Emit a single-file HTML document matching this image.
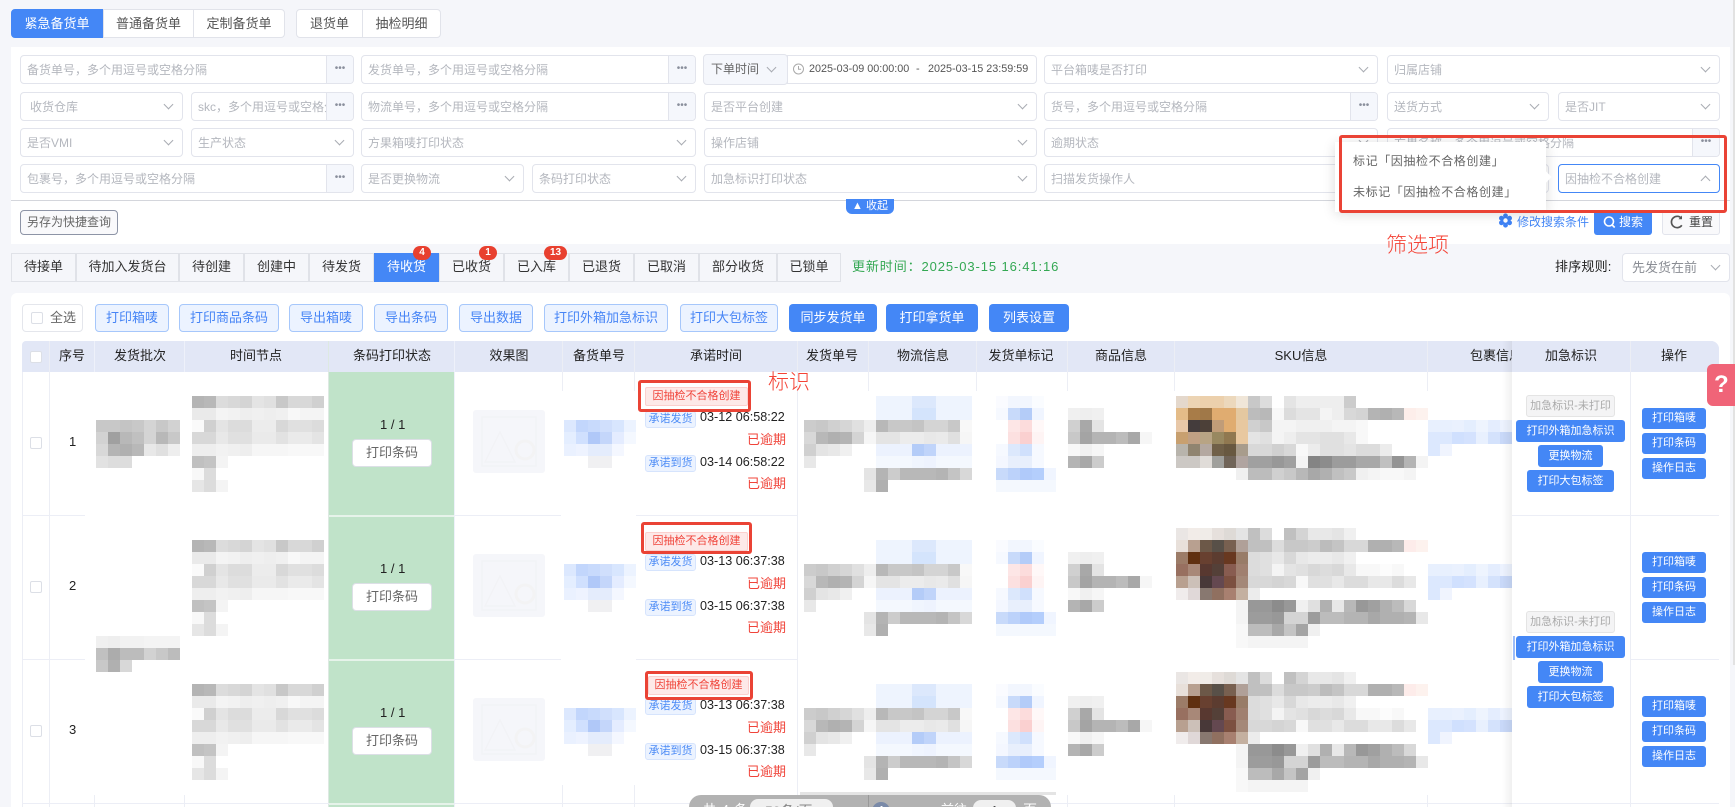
<!DOCTYPE html>
<html lang="zh"><head><meta charset="utf-8"><title>备货单</title>
<style>
*{box-sizing:border-box}
html,body{margin:0;padding:0;width:1735px;height:807px;overflow:hidden}
body{background:#f5f6fa;font-family:"Liberation Sans","Noto Sans CJK SC",sans-serif;font-size:13px;color:#222}
#w{position:relative;width:1735px;height:807px;overflow:hidden;background:#f5f6fa}
.a{position:absolute}
.x{position:absolute;white-space:nowrap;line-height:20px}
.g{position:absolute;top:9px;height:29px;background:#fff;border:1px solid #e1e3ea;text-align:center;line-height:27px;color:#555}
.f{position:absolute;height:29px;background:#fff;border:1.5px solid #e2e4ec;border-radius:4px;padding-left:6px;line-height:28px;font-size:12px;color:#b4b7be;white-space:nowrap;overflow:hidden}
.f u{position:absolute;right:0;top:0;bottom:0;width:27px;background:#f5f7fc;border-left:1px solid #e2e4ec;text-decoration:none;text-align:center;color:#8a8f9c;font-size:10px;line-height:26px}
.f i{position:absolute;right:10px;top:8px;width:7px;height:7px;border-right:1px solid #a8abb2;border-bottom:1px solid #a8abb2;transform:rotate(45deg)}
.t{position:absolute;top:253px;height:29px;border:1.5px solid #e0e2e8;border-left-width:.75px;border-right-width:.75px;background:#f5f6fa;text-align:center;line-height:26px;color:#333}
.bd{position:absolute;top:246px;height:14px;background:#e8402f;color:#fff;border-radius:7px;font-size:10px;font-weight:bold;text-align:center;line-height:14px;z-index:5}
.l{position:absolute;top:304px;height:28px;background:#ecf3ff;border:1px solid #a6c7fb;border-radius:4px;text-align:center;line-height:26px;color:#4785f6;white-space:nowrap}
.p{position:absolute;top:304px;height:28px;background:#4487f6;border-radius:4px;text-align:center;line-height:28px;color:#fff}
.h{position:absolute;top:346px;width:100px;text-align:center;line-height:20px;color:#222;white-space:nowrap}
.v{position:absolute;width:1px;background:#eceef5}
.r{position:absolute;height:1px;background:#eceef6}
.cb{position:absolute;width:12px;height:12px;background:#fff;border:1px solid #dcdfe6;border-radius:2px}
.pb{position:absolute;width:80px;height:28px;left:352px;background:#fff;border:1px solid #dcdfe6;border-radius:4px;text-align:center;line-height:26px;color:#666}
.ph{position:absolute;left:473px;width:72px;height:63px;background:#f5f6fa;border-radius:3px}
.pk{position:absolute;height:19px;background:#fde9e8;border:1px solid #fbd0ce;border-radius:2px;color:#f0443a;font-size:11px;text-align:center;line-height:17px;white-space:nowrap}
.bl{position:absolute;left:645px;width:51px;height:17px;background:#ecf3ff;border:1px solid #d6e4fd;border-radius:3px;color:#4d8cf6;font-size:11px;text-align:center;line-height:15px;white-space:nowrap}
.dt{position:absolute;left:700px;font-size:12.6px;line-height:20px;color:#222;white-space:nowrap}
.od{position:absolute;left:747px;line-height:20px;color:#f0443a;white-space:nowrap}
.rd{position:absolute;border:3px solid #ea4335;border-radius:3px;z-index:6}
.an{position:absolute;color:#f44336;font-size:21px;line-height:24px;font-weight:300;white-space:nowrap;z-index:6}
.s{position:absolute;height:22px;background:#4487f6;border-radius:3px;color:#fff;font-size:11px;line-height:22px;text-align:center;white-space:nowrap;z-index:3}
svg .mm rect{width:12px;height:12px}
</style></head><body><div id="w">

<!-- top tabs -->
<div class="g" style="left:11px;width:92px;background:#4487f6;border-color:#4487f6;color:#fff;border-radius:4px 0 0 4px">紧急备货单</div>
<div class="g" style="left:103px;width:91px">普通备货单</div>
<div class="g" style="left:193px;width:92px;border-radius:0 4px 4px 0">定制备货单</div>
<div class="g" style="left:296px;width:67px;border-radius:4px 0 0 4px">退货单</div>
<div class="g" style="left:362px;width:79px;border-radius:0 4px 4px 0">抽检明细</div>

<!-- filter panel -->
<div class="a" style="left:11px;top:47px;width:1719px;height:197px;background:#fff"></div>

<div class="f" style="left:20px;top:55px;width:334px">备货单号，多个用逗号或空格分隔<u>•••</u></div>
<div class="f" style="left:361px;top:55px;width:335px">发货单号，多个用逗号或空格分隔<u>•••</u></div>
<div class="f" style="left:703px;top:54px;width:85px;height:31px;background:#f5f7fc;color:#666;padding-left:7px;line-height:28px">下单时间<i style="top:9px;right:12px"></i></div>
<div class="f" style="left:787px;top:55px;width:250px;border-radius:0 4px 4px 0"></div>
<svg class="a" style="left:792px;top:62px" width="13" height="14" viewBox="0 0 13 14"><circle cx="6.5" cy="7" r="5" fill="none" stroke="#aaa"/><path d="M6.5 4v3.2h2.6" fill="none" stroke="#aaa"/></svg>
<div class="x" style="left:809px;top:59px;font-size:10.8px;color:#555">2025-03-09 00:00:00</div>
<div class="x" style="left:916px;top:59px;font-size:11px;color:#555">-</div>
<div class="x" style="left:928px;top:59px;font-size:10.8px;color:#555">2025-03-15 23:59:59</div>
<div class="f" style="left:1044px;top:55px;width:334px">平台箱唛是否打印<i></i></div>
<div class="f" style="left:1387px;top:55px;width:333px">归属店铺<i></i></div>

<div class="f" style="left:20px;top:92px;width:163px;padding-left:9px">收货仓库<i></i></div>
<div class="f" style="left:191px;top:92px;width:163px"><span style="display:block;width:129px;overflow:hidden">skc，多个用逗号或空格分隔</span><u>•••</u></div>
<div class="f" style="left:361px;top:92px;width:335px">物流单号，多个用逗号或空格分隔<u>•••</u></div>
<div class="f" style="left:704px;top:92px;width:333px">是否平台创建<i></i></div>
<div class="f" style="left:1044px;top:92px;width:334px">货号，多个用逗号或空格分隔<u>•••</u></div>
<div class="f" style="left:1387px;top:92px;width:162px">送货方式<i></i></div>
<div class="f" style="left:1558px;top:92px;width:162px">是否JIT<i></i></div>

<div class="f" style="left:20px;top:128px;width:163px">是否VMI<i></i></div>
<div class="f" style="left:191px;top:128px;width:163px">生产状态<i></i></div>
<div class="f" style="left:361px;top:128px;width:335px">方果箱唛打印状态<i></i></div>
<div class="f" style="left:704px;top:128px;width:333px">操作店铺<i></i></div>
<div class="f" style="left:1044px;top:128px;width:334px">逾期状态<i></i></div>
<div class="f" style="left:1387px;top:128px;width:333px">方果名称，多个用逗号或空格分隔<u>•••</u></div>

<div class="f" style="left:20px;top:164px;width:334px">包裹号，多个用逗号或空格分隔<u>•••</u></div>
<div class="f" style="left:361px;top:164px;width:163px">是否更换物流<i></i></div>
<div class="f" style="left:532px;top:164px;width:164px">条码打印状态<i></i></div>
<div class="f" style="left:704px;top:164px;width:333px">加急标识打印状态<i></i></div>
<div class="f" style="left:1044px;top:164px;width:334px">扫描发货操作人<i></i></div>
<div class="f" style="left:1387px;top:164px;width:162px">是否<i></i></div>
<div class="f" style="left:1558px;top:164px;width:162px;border:1px solid #4487f6">因抽检不合格创建<i style="top:12px;transform:rotate(225deg)"></i></div>

<div class="a" style="left:11px;top:200px;width:1719px;height:1px;background:#d4d6dc"></div>
<div class="a" style="left:846px;top:199px;width:48px;height:15px;background:#4487f6;border-radius:0 0 6px 6px;color:#fff;font-size:11px;line-height:15px;text-align:center;white-space:nowrap">▲ 收起</div>

<div class="a" style="left:20px;top:210px;width:98px;height:25px;background:#f9f9fb;border:1px solid #8d94a6;border-radius:4px;font-size:12px;text-align:center;line-height:23px;color:#666">另存为快捷查询</div>

<svg class="a" style="left:1498px;top:213px" width="15" height="15" viewBox="0 0 15 15"><g fill="#3f83f5"><circle cx="7.500" cy="2.800" r="2.400"/><circle cx="7.500" cy="12.200" r="2.400"/><circle cx="3.400" cy="5.200" r="2.400"/><circle cx="11.600" cy="5.200" r="2.400"/><circle cx="3.400" cy="9.800" r="2.400"/><circle cx="11.600" cy="9.800" r="2.400"/><circle cx="7.500" cy="7.500" r="4"/></g><circle cx="7.500" cy="7.500" r="2.200" fill="#fff"/></svg>
<div class="x" style="left:1517px;top:212px;font-size:12px;color:#4487f6">修改搜索条件</div>
<div class="a" style="left:1594px;top:210px;width:58px;height:25px;background:#4487f6;border-radius:3px;color:#fff;font-size:12px;line-height:25px;padding-left:25px">搜索</div>
<svg class="a" style="left:1602px;top:215px" width="15" height="15" viewBox="0 0 15 15"><circle cx="7" cy="6.500" r="4.500" fill="none" stroke="#fff" stroke-width="1.600"/><path d="M10.200 10l2.500 2.500" stroke="#fff" stroke-width="1.600"/></svg>
<div class="a" style="left:1662px;top:210px;width:58px;height:25px;background:#f9f9fb;border:1px solid #e2e4ec;border-radius:3px;color:#444;font-size:12px;line-height:23px;padding-left:26px">重置</div>
<svg class="a" style="left:1669px;top:214px" width="16" height="16" viewBox="0 0 16 16"><path d="M12.500 4.300A5.700 5.700 0 1 0 12.800 11.300" fill="none" stroke="#555" stroke-width="1.700"/><path d="M13 1.500v3.800H9.500z" fill="#555"/></svg>

<!-- popover -->
<div class="a" style="left:1335px;top:142px;width:211px;height:70px;background:#fff;box-shadow:0 2px 12px rgba(0,0,0,.14);z-index:4"></div>
<div class="a" style="left:1542px;top:173px;width:8px;height:8px;background:#fff;transform:rotate(45deg);z-index:4"></div>
<div class="x" style="left:1353px;top:151px;font-size:12px;color:#666;z-index:5;letter-spacing:.6px">标记「因抽检不合格创建」</div>
<div class="x" style="left:1353px;top:182px;font-size:12px;color:#666;z-index:5;letter-spacing:.6px">未标记「因抽检不合格创建」</div>
<div class="rd" style="left:1339px;top:135px;width:388px;height:78px"></div>
<div class="an" style="left:1386px;top:234px">筛选项</div>

<!-- status tabs -->
<div class="t" style="left:11px;width:65px">待接单</div>
<div class="t" style="left:76px;width:103px">待加入发货台</div>
<div class="t" style="left:179px;width:65px">待创建</div>
<div class="t" style="left:244px;width:65px">创建中</div>
<div class="t" style="left:309px;width:65px">待发货</div>
<div class="t" style="left:374px;width:65px;background:#4487f6;border-color:#4487f6;color:#fff">待收货</div>
<div class="t" style="left:439px;width:65px">已收货</div>
<div class="t" style="left:504px;width:65px">已入库</div>
<div class="t" style="left:569px;width:65px">已退货</div>
<div class="t" style="left:634px;width:65px">已取消</div>
<div class="t" style="left:699px;width:78px">部分收货</div>
<div class="t" style="left:777px;width:64px">已锁单</div>
<div class="bd" style="left:413px;width:18px">4</div>
<div class="bd" style="left:479px;width:18px">1</div>
<div class="bd" style="left:544px;width:23px">13</div>
<div class="x" style="left:852px;top:257px;color:#34a853;letter-spacing:.9px">更新时间：2025-03-15 16:41:16</div>
<div class="x" style="left:1555px;top:257px;color:#222;letter-spacing:.2px">排序规则:</div>
<div class="f" style="left:1622px;top:253px;width:108px;height:29px;font-size:13px;color:#8a8d94;padding-left:9px">先发货在前<i></i></div>

<!-- table panel -->
<div class="a" style="left:11px;top:293px;width:1719px;height:514px;background:#fff;border-radius:6px 6px 0 0"></div>

<div class="a" style="left:22px;top:304px;width:61px;height:28px;border:1px solid #e4e6ec;border-radius:4px;background:#fff"></div>
<div class="cb" style="left:31px;top:312px"></div>
<div class="x" style="left:50px;top:308px;color:#666">全选</div>
<div class="l" style="left:95px;width:74px">打印箱唛</div>
<div class="l" style="left:179px;width:100px">打印商品条码</div>
<div class="l" style="left:289px;width:74px">导出箱唛</div>
<div class="l" style="left:374px;width:74px">导出条码</div>
<div class="l" style="left:459px;width:74px">导出数据</div>
<div class="l" style="left:544px;width:124px">打印外箱加急标识</div>
<div class="l" style="left:680px;width:98px">打印大包标签</div>
<div class="p" style="left:789px;width:88px">同步发货单</div>
<div class="p" style="left:886px;width:92px">打印拿货单</div>
<div class="p" style="left:989px;width:80px">列表设置</div>

<!-- table head -->
<div class="a" style="left:22px;top:341px;width:1697px;height:31px;background:#e2e7f6;border-radius:4px 8px 0 0"></div>
<div class="cb" style="left:30px;top:351px"></div>
<div class="h" style="left:22px;width:100px">序号</div>
<div class="h" style="left:90px">发货批次</div>
<div class="h" style="left:206px">时间节点</div>
<div class="h" style="left:342px">条码打印状态</div>
<div class="h" style="left:459px">效果图</div>
<div class="h" style="left:549px">备货单号</div>
<div class="h" style="left:666px">承诺时间</div>
<div class="h" style="left:782px">发货单号</div>
<div class="h" style="left:873px">物流信息</div>
<div class="h" style="left:971px">发货单标记</div>
<div class="h" style="left:1071px">商品信息</div>
<div class="h" style="left:1251px">SKU信息</div>
<div class="x" style="left:1470px;top:346px">包裹信息</div>

<!-- grid lines -->
<div class="v" style="left:22px;top:372px;height:435px"></div>
<div class="v" style="left:49px;top:341px;height:466px"></div>
<div class="v" style="left:94px;top:341px;height:31px;background:#eef1fa"></div>
<div class="v" style="left:184px;top:341px;height:31px;background:#eef1fa"></div>
<div class="v" style="left:328px;top:341px;height:466px;background:#dde9e2"></div>
<div class="v" style="left:454px;top:341px;height:466px;background:#eef1fa"></div>
<div class="v" style="left:562px;top:341px;height:50px"></div>
<div class="v" style="left:634px;top:341px;height:50px"></div>
<div class="v" style="left:797px;top:341px;height:466px"></div>
<div class="v" style="left:868px;top:341px;height:50px"></div>
<div class="v" style="left:976px;top:341px;height:50px"></div>
<div class="v" style="left:1067px;top:341px;height:50px"></div>
<div class="v" style="left:1174px;top:341px;height:50px"></div>
<div class="v" style="left:1427px;top:341px;height:50px"></div>
<div class="v" style="left:562px;top:785px;height:22px"></div>
<div class="v" style="left:634px;top:785px;height:22px"></div>
<div class="v" style="left:94px;top:795px;height:12px"></div>
<div class="v" style="left:184px;top:795px;height:12px"></div>
<div class="v" style="left:1067px;top:795px;height:12px"></div>
<div class="v" style="left:1174px;top:795px;height:12px"></div>
<div class="v" style="left:1427px;top:795px;height:12px"></div>
<div class="r" style="left:22px;top:515px;width:63px"></div>
<div class="r" style="left:22px;top:659px;width:63px"></div>
<div class="r" style="left:22px;top:803px;width:1697px"></div>
<div class="r" style="left:455px;top:515px;width:106px"></div>
<div class="r" style="left:455px;top:659px;width:106px"></div>
<div class="r" style="left:636px;top:515px;width:161px"></div>
<div class="r" style="left:636px;top:659px;width:161px"></div>

<!-- green barcode column -->
<div class="a" style="left:329px;top:372px;width:125px;height:435px;background:#c0e3c9"></div>
<div class="a" style="left:329px;top:515px;width:125px;height:1.500px;background:#e6f3ea"></div>
<div class="a" style="left:329px;top:659px;width:125px;height:1.500px;background:#e6f3ea"></div>
<div class="a" style="left:329px;top:803px;width:125px;height:1.500px;background:#e6f3ea"></div>

<!-- row contents -->
<div class="cb" style="left:30px;top:437px"></div><div class="x" style="left:69px;top:432px">1</div>
<div class="cb" style="left:30px;top:581px"></div><div class="x" style="left:69px;top:576px">2</div>
<div class="cb" style="left:30px;top:725px"></div><div class="x" style="left:69px;top:720px">3</div>

<div class="x" style="left:380px;top:415px">1 / 1</div><div class="pb" style="top:439px">打印条码</div>
<div class="x" style="left:380px;top:559px">1 / 1</div><div class="pb" style="top:583px">打印条码</div>
<div class="x" style="left:380px;top:703px">1 / 1</div><div class="pb" style="top:727px">打印条码</div>

<div class="ph" style="top:410px"><svg width="72" height="63" viewBox="0 0 72 63"><path d="M9 7h54v49H9zM12 52L27 22l15 30z" fill="none" stroke="#f2f3f6" stroke-width="1.500"/><circle cx="52" cy="40" r="9" fill="none" stroke="#f3f3f4" stroke-width="3"/></svg></div>
<div class="ph" style="top:554px"><svg width="72" height="63" viewBox="0 0 72 63"><path d="M9 7h54v49H9zM12 52L27 22l15 30z" fill="none" stroke="#f2f3f6" stroke-width="1.500"/><circle cx="52" cy="40" r="9" fill="none" stroke="#f3f3f4" stroke-width="3"/></svg></div>
<div class="ph" style="top:698px"><svg width="72" height="63" viewBox="0 0 72 63"><path d="M9 7h54v49H9zM12 52L27 22l15 30z" fill="none" stroke="#f2f3f6" stroke-width="1.500"/><circle cx="52" cy="40" r="9" fill="none" stroke="#f3f3f4" stroke-width="3"/></svg></div>

<!-- mosaic blocks -->
<svg class="a" style="left:0;top:0;z-index:1;pointer-events:none" width="1735" height="807" viewBox="0 0 1735 807">
<g class="mm">
<!-- batch 1 -->
<rect x="96" y="420" fill="#c8c8c8"/><rect x="108" y="420" fill="#c8c8c8"/><rect x="120" y="420" fill="#c4c4c4"/><rect x="132" y="420" fill="#c8c8c8"/><rect x="144" y="420" fill="#d4d4d4"/><rect x="156" y="420" fill="#c8c8c8"/><rect x="168" y="420" fill="#d2d2d2"/>
<rect x="96" y="432" fill="#d2d2d2"/><rect x="108" y="432" fill="#a0a0a0"/><rect x="120" y="432" fill="#b8b8b8"/><rect x="132" y="432" fill="#c0c0c0"/><rect x="144" y="432" fill="#d4d4d4"/><rect x="156" y="432" fill="#b8b8b8"/><rect x="168" y="432" fill="#c8c8c8"/>
<rect x="96" y="444" fill="#d8d8d8"/><rect x="108" y="444" fill="#b4b4b4"/><rect x="120" y="444" fill="#b0b0b0"/><rect x="132" y="444" fill="#b8b8b8"/><rect x="144" y="444" fill="#e8e8e8"/><rect x="156" y="444" fill="#e0e0e0"/><rect x="168" y="444" fill="#eeeeee"/>
<rect x="96" y="456" fill="#e2e2e2"/><rect x="108" y="456" fill="#dddddd"/><rect x="120" y="456" fill="#dddddd"/>
<!-- batch 2 -->
<rect x="96" y="636" fill="#f0f0f0"/><rect x="108" y="636" fill="#eeeeee"/><rect x="120" y="636" fill="#f2f2f2"/><rect x="132" y="636" fill="#f2f2f2"/><rect x="144" y="636" fill="#f4f4f4"/><rect x="156" y="636" fill="#f4f4f4"/><rect x="168" y="636" fill="#f4f4f4"/>
<rect x="96" y="648" fill="#c0c0c0"/><rect x="108" y="648" fill="#acacac"/><rect x="120" y="648" fill="#bcbcbc"/><rect x="132" y="648" fill="#bcbcbc"/><rect x="144" y="648" fill="#d2d2d2"/><rect x="156" y="648" fill="#c8c8c8"/><rect x="168" y="648" fill="#bcbcbc"/>
<rect x="96" y="660" fill="#c8c8c8"/><rect x="108" y="660" fill="#b0b0b0"/><rect x="120" y="660" fill="#d8d8d8"/>
<!-- repeated -->
<g id="rowblk">
<!-- time -->
<rect x="192" y="396" fill="#b4b4b4"/><rect x="204" y="396" fill="#b8b8b8"/><rect x="216" y="396" fill="#dcdcdc"/><rect x="228" y="396" fill="#d8d8d8"/><rect x="240" y="396" fill="#d4d4d4"/><rect x="252" y="396" fill="#e4e4e4"/><rect x="264" y="396" fill="#e0e0e0"/><rect x="276" y="396" fill="#c8c8c8"/><rect x="288" y="396" fill="#d8d8d8"/><rect x="300" y="396" fill="#d8d8d8"/><rect x="312" y="396" fill="#d0d0d0"/>
<rect x="192" y="408" fill="#eaeaea"/><rect x="204" y="408" fill="#eaeaea"/><rect x="216" y="408" fill="#f4f4f4"/><rect x="228" y="408" fill="#f2f2f2"/><rect x="240" y="408" fill="#eeeeee"/><rect x="252" y="408" fill="#f0f0f0"/><rect x="264" y="408" fill="#eeeeee"/><rect x="276" y="408" fill="#f0f0f0"/><rect x="288" y="408" fill="#f8f8f8"/><rect x="300" y="408" fill="#f4f4f4"/><rect x="312" y="408" fill="#f4f4f4"/>
<rect x="192" y="420" fill="#fafafa"/><rect x="204" y="420" fill="#d0d0d0"/><rect x="216" y="420" fill="#e4e4e4"/><rect x="228" y="420" fill="#dcdcdc"/><rect x="240" y="420" fill="#dcdcdc"/><rect x="252" y="420" fill="#ececec"/><rect x="264" y="420" fill="#ececec"/><rect x="276" y="420" fill="#d8d8d8"/><rect x="288" y="420" fill="#e0e0e0"/><rect x="300" y="420" fill="#e0e0e0"/><rect x="312" y="420" fill="#dcdcdc"/>
<rect x="192" y="432" fill="#d8d8d8"/><rect x="204" y="432" fill="#d8d8d8"/><rect x="216" y="432" fill="#e8e8e8"/><rect x="228" y="432" fill="#e0e0e0"/><rect x="240" y="432" fill="#e0e0e0"/><rect x="252" y="432" fill="#eaeaea"/><rect x="264" y="432" fill="#eaeaea"/><rect x="276" y="432" fill="#e2e2e2"/><rect x="288" y="432" fill="#eaeaea"/><rect x="300" y="432" fill="#eaeaea"/><rect x="312" y="432" fill="#e4e4e4"/>
<rect x="192" y="444" fill="#eeeeee"/><rect x="204" y="444" fill="#eeeeee"/><rect x="216" y="444" fill="#f2f2f2"/><rect x="228" y="444" fill="#f0f0f0"/><rect x="240" y="444" fill="#eeeeee"/><rect x="252" y="444" fill="#f6f6f6"/><rect x="264" y="444" fill="#f6f6f6"/><rect x="276" y="444" fill="#f6f6f6"/><rect x="288" y="444" fill="#f8f8f8"/><rect x="300" y="444" fill="#f8f8f8"/><rect x="312" y="444" fill="#f8f8f8"/>
<rect x="192" y="456" fill="#c0c0c0"/><rect x="204" y="456" fill="#c4c4c4"/><rect x="216" y="456" fill="#f4f4f4"/>
<rect x="192" y="468" fill="#f8f8f8"/><rect x="204" y="468" fill="#dcdcdc"/>
<rect x="192" y="480" fill="#e6e6e6"/><rect x="204" y="480" fill="#dcdcdc"/><rect x="216" y="480" fill="#f4f4f4"/>
<!-- stock no -->
<rect x="564" y="420" fill="#dce8fe"/><rect x="576" y="420" fill="#c2d6fc"/><rect x="588" y="420" fill="#c8dafc"/><rect x="600" y="420" fill="#d0dffc"/><rect x="612" y="420" fill="#d8e6fe"/><rect x="624" y="420" fill="#ecf3ff"/>
<rect x="564" y="432" fill="#e4eeff"/><rect x="576" y="432" fill="#d0e0fe"/><rect x="588" y="432" fill="#b0c8f8"/><rect x="600" y="432" fill="#c4d6fa"/><rect x="612" y="432" fill="#e4ecff"/><rect x="624" y="432" fill="#f4f8ff"/>
<rect x="564" y="444" fill="#eaf1ff"/><rect x="576" y="444" fill="#eef3ff"/><rect x="588" y="444" fill="#e4ecfc"/><rect x="600" y="444" fill="#e4ecfc"/><rect x="612" y="444" fill="#f4f7ff"/>
<rect x="588" y="456" fill="#f0f0f2"/><rect x="600" y="456" fill="#f0f0f2"/>
<!-- ship no -->
<rect x="804" y="420" fill="#cccccc"/><rect x="816" y="420" fill="#c8c8c8"/><rect x="828" y="420" fill="#d0d0d0"/><rect x="840" y="420" fill="#d6d6d6"/><rect x="852" y="420" fill="#e0e0e0"/><rect x="864" y="420" fill="#eeeeee"/>
<rect x="804" y="432" fill="#d8d8d8"/><rect x="816" y="432" fill="#b8b8b8"/><rect x="828" y="432" fill="#b0b0b0"/><rect x="840" y="432" fill="#b4b4b4"/><rect x="852" y="432" fill="#d4d4d4"/><rect x="864" y="432" fill="#f6f6f6"/>
<rect x="804" y="444" fill="#d0d0d0"/><rect x="816" y="444" fill="#e4e4e4"/><rect x="828" y="444" fill="#e8e8e8"/><rect x="840" y="444" fill="#f0f0f0"/>
<rect x="804" y="456" fill="#e8e8e8"/>
<rect x="864" y="468" fill="#e4e4e4"/><rect x="864" y="480" fill="#e8e8e8"/>
<!-- logistics -->
<rect x="876" y="396" fill="#eef4fe"/><rect x="888" y="396" fill="#eef4fe"/><rect x="900" y="396" fill="#eef4fe"/><rect x="912" y="396" fill="#dce8fc"/><rect x="924" y="396" fill="#dce8fc"/><rect x="936" y="396" fill="#eef4fe"/><rect x="948" y="396" fill="#eef4fe"/><rect x="960" y="396" fill="#eef4fe"/>
<rect x="876" y="408" fill="#eef4fe"/><rect x="888" y="408" fill="#eef4fe"/><rect x="900" y="408" fill="#eef4fe"/><rect x="912" y="408" fill="#d4e4fc"/><rect x="924" y="408" fill="#d4e4fc"/><rect x="936" y="408" fill="#eef4fe"/><rect x="948" y="408" fill="#eef4fe"/><rect x="960" y="408" fill="#eef4fe"/>
<rect x="876" y="420" fill="#b8b8b8"/><rect x="888" y="420" fill="#c8c8c8"/><rect x="900" y="420" fill="#c8c8c8"/><rect x="912" y="420" fill="#c4c4c4"/><rect x="924" y="420" fill="#d4d4d4"/><rect x="936" y="420" fill="#d4d4d4"/><rect x="948" y="420" fill="#c8c8c8"/><rect x="960" y="420" fill="#f8f8f8"/>
<rect x="876" y="432" fill="#e4e4e4"/><rect x="888" y="432" fill="#e4e4e4"/><rect x="900" y="432" fill="#ececec"/><rect x="912" y="432" fill="#ececec"/><rect x="924" y="432" fill="#e8e8e8"/><rect x="936" y="432" fill="#eaeaea"/><rect x="948" y="432" fill="#e0e0e0"/><rect x="960" y="432" fill="#f6f6f6"/>
<rect x="876" y="444" fill="#ecf2fe"/><rect x="888" y="444" fill="#ecf2fe"/><rect x="900" y="444" fill="#ecf2fe"/><rect x="912" y="444" fill="#b4ccf8"/><rect x="924" y="444" fill="#c0d4fa"/><rect x="936" y="444" fill="#ecf2fe"/><rect x="948" y="444" fill="#ecf2fe"/><rect x="960" y="444" fill="#ecf2fe"/>
<rect x="876" y="456" fill="#f4f8fe"/><rect x="888" y="456" fill="#f4f8fe"/><rect x="900" y="456" fill="#f4f8fe"/><rect x="912" y="456" fill="#f0f5fe"/><rect x="924" y="456" fill="#eef3fe"/><rect x="936" y="456" fill="#f4f8fe"/><rect x="948" y="456" fill="#f4f8fe"/><rect x="960" y="456" fill="#f4f8fe"/>
<rect x="876" y="468" fill="#b4b4b4"/><rect x="888" y="468" fill="#cccccc"/><rect x="900" y="468" fill="#b8b8b8"/><rect x="912" y="468" fill="#b8b8b8"/><rect x="924" y="468" fill="#b8b8b8"/><rect x="936" y="468" fill="#b4b4b4"/><rect x="948" y="468" fill="#c4c4c4"/><rect x="960" y="468" fill="#d8d8d8"/>
<rect x="876" y="480" fill="#b0b0b0"/>
<!-- ship mark -->
<rect x="996" y="396" fill="#fafbff"/><rect x="1008" y="396" fill="#f2f6fe"/><rect x="1020" y="396" fill="#f2f6fe"/><rect x="1032" y="396" fill="#fafcff"/>
<rect x="996" y="408" fill="#f6f9ff"/><rect x="1008" y="408" fill="#c8dafa"/><rect x="1020" y="408" fill="#b4ccf8"/><rect x="1032" y="408" fill="#f0f5ff"/>
<rect x="1008" y="420" fill="#fde6e6"/><rect x="1020" y="420" fill="#fcdcdc"/><rect x="1032" y="420" fill="#fff8f8"/>
<rect x="1008" y="432" fill="#fce0e0"/><rect x="1020" y="432" fill="#fad0d0"/><rect x="1032" y="432" fill="#fef4f4"/>
<rect x="996" y="444" fill="#f6f9ff"/><rect x="1008" y="444" fill="#dce8fc"/><rect x="1020" y="444" fill="#d0e0fc"/><rect x="1032" y="444" fill="#f6f9ff"/>
<rect x="996" y="456" fill="#f4f7ff"/><rect x="1008" y="456" fill="#e8effc"/><rect x="1020" y="456" fill="#e8effc"/><rect x="1032" y="456" fill="#f6f9ff"/>
<rect x="996" y="468" fill="#c8dafa"/><rect x="1008" y="468" fill="#bcd2fa"/><rect x="1020" y="468" fill="#b0cafa"/><rect x="1032" y="468" fill="#b4cefc"/><rect x="1044" y="468" fill="#f0f5ff"/>
<rect x="996" y="480" fill="#f4f8fe"/><rect x="1008" y="480" fill="#f4f8fe"/><rect x="1020" y="480" fill="#f4f8fe"/><rect x="1032" y="480" fill="#f4f8fe"/><rect x="1044" y="480" fill="#f4f8fe"/>
<!-- goods -->
<rect x="1068" y="408" fill="#f0f0f0"/><rect x="1080" y="408" fill="#eeeeee"/><rect x="1092" y="408" fill="#f0f0f0"/>
<rect x="1068" y="420" fill="#d0d0d0"/><rect x="1080" y="420" fill="#a8a8a8"/><rect x="1092" y="420" fill="#e4e4e4"/>
<rect x="1068" y="432" fill="#c8c8c8"/><rect x="1080" y="432" fill="#a4a4a4"/><rect x="1092" y="432" fill="#b4b4b4"/><rect x="1104" y="432" fill="#b4b4b4"/><rect x="1116" y="432" fill="#bcbcbc"/><rect x="1128" y="432" fill="#a8a8a8"/><rect x="1140" y="432" fill="#f6f6f6"/>
<rect x="1068" y="444" fill="#f8f8f8"/><rect x="1080" y="444" fill="#f0f0f0"/><rect x="1092" y="444" fill="#f6f6f6"/>
<rect x="1068" y="456" fill="#b4b4b4"/><rect x="1080" y="456" fill="#a8a8a8"/><rect x="1092" y="456" fill="#cccccc"/>
<!-- parcel -->
<rect x="1428" y="420" fill="#e8f0fe"/><rect x="1440" y="420" fill="#e8f0fe"/><rect x="1452" y="420" fill="#eaf1fe"/><rect x="1464" y="420" fill="#e4eefe"/><rect x="1476" y="420" fill="#eef4fe"/><rect x="1488" y="420" fill="#e4edfe"/><rect x="1500" y="420" fill="#ecf2fe"/>
<rect x="1428" y="432" fill="#dce8fe"/><rect x="1440" y="432" fill="#dce8fe"/><rect x="1452" y="432" fill="#d0e0fe"/><rect x="1464" y="432" fill="#d4e2fe"/><rect x="1476" y="432" fill="#e8f0fe"/><rect x="1488" y="432" fill="#d4e2fc"/><rect x="1500" y="432" fill="#c8d8f8"/>
<rect x="1428" y="444" fill="#dce8fe"/><rect x="1440" y="444" fill="#f0f4fe"/>
</g>
<use href="#rowblk" y="144"/>
<use href="#rowblk" y="288"/>
<!-- SKU row 1 -->
<rect x="1176" y="396" fill="#e4d8cc"/><rect x="1188" y="396" fill="#ecd4b4"/><rect x="1200" y="396" fill="#ecd0ac"/><rect x="1212" y="396" fill="#ecd0ac"/><rect x="1224" y="396" fill="#ecd8bc"/><rect x="1236" y="396" fill="#f0e6d8"/><rect x="1248" y="396" fill="#c8c8c8"/><rect x="1260" y="396" fill="#dcdcdc"/><rect x="1284" y="396" fill="#e4e4e4"/><rect x="1296" y="396" fill="#eeeeee"/><rect x="1308" y="396" fill="#eeeeee"/><rect x="1320" y="396" fill="#eeeeee"/><rect x="1332" y="396" fill="#eeeeee"/><rect x="1344" y="396" fill="#cccccc"/>
<rect x="1176" y="408" fill="#e4bc88"/><rect x="1188" y="408" fill="#a87c48"/><rect x="1200" y="408" fill="#a07848"/><rect x="1212" y="408" fill="#e0ac70"/><rect x="1224" y="408" fill="#e0ac70"/><rect x="1236" y="408" fill="#e4c8a0"/><rect x="1248" y="408" fill="#bcbcbc"/><rect x="1260" y="408" fill="#b8b8b8"/><rect x="1272" y="408" fill="#f8f8f8"/><rect x="1284" y="408" fill="#dcdcdc"/><rect x="1296" y="408" fill="#e4e4e4"/><rect x="1308" y="408" fill="#e4e4e4"/><rect x="1320" y="408" fill="#f4f4f4"/><rect x="1332" y="408" fill="#eeeeee"/><rect x="1344" y="408" fill="#d8d8d8"/><rect x="1356" y="408" fill="#d4d4d4"/><rect x="1368" y="408" fill="#b4b4b4"/><rect x="1380" y="408" fill="#b0b0b0"/><rect x="1392" y="408" fill="#b8b8b8"/><rect x="1404" y="408" fill="#fdeeea"/><rect x="1416" y="408" fill="#fdf2ee"/>
<rect x="1176" y="420" fill="#e8c8a8"/><rect x="1188" y="420" fill="#443c3c"/><rect x="1200" y="420" fill="#4c4038"/><rect x="1212" y="420" fill="#c09c78"/><rect x="1224" y="420" fill="#e0ac70"/><rect x="1236" y="420" fill="#e8c8a0"/><rect x="1248" y="420" fill="#d0d0d0"/><rect x="1260" y="420" fill="#c8c8c8"/><rect x="1272" y="420" fill="#f4f4f4"/><rect x="1284" y="420" fill="#f4f4f4"/><rect x="1296" y="420" fill="#f0f0f0"/><rect x="1308" y="420" fill="#f0f0f0"/><rect x="1320" y="420" fill="#f0f0f0"/><rect x="1332" y="420" fill="#f4f4f4"/><rect x="1344" y="420" fill="#f4f4f4"/><rect x="1356" y="420" fill="#f8f8f8"/>
<rect x="1176" y="432" fill="#c8a070"/><rect x="1188" y="432" fill="#c0a084"/><rect x="1200" y="432" fill="#b8a484"/><rect x="1212" y="432" fill="#988860"/><rect x="1224" y="432" fill="#907850"/><rect x="1236" y="432" fill="#e8c8a0"/><rect x="1248" y="432" fill="#e4e4e4"/><rect x="1260" y="432" fill="#e0e0e0"/><rect x="1272" y="432" fill="#f4f4f4"/><rect x="1284" y="432" fill="#eeeeee"/><rect x="1296" y="432" fill="#e4e4e4"/><rect x="1308" y="432" fill="#e4e4e4"/><rect x="1320" y="432" fill="#e0e0e0"/><rect x="1332" y="432" fill="#e0e0e0"/><rect x="1344" y="432" fill="#e8e8e8"/><rect x="1356" y="432" fill="#f8f8f8"/>
<rect x="1176" y="444" fill="#b8b4ac"/><rect x="1188" y="444" fill="#908470"/><rect x="1200" y="444" fill="#b4a8a0"/><rect x="1212" y="444" fill="#706048"/><rect x="1224" y="444" fill="#685840"/><rect x="1236" y="444" fill="#a89c8c"/><rect x="1248" y="444" fill="#d8d8d8"/><rect x="1260" y="444" fill="#d8d8d8"/><rect x="1272" y="444" fill="#d0d0d0"/><rect x="1284" y="444" fill="#d8d8d8"/><rect x="1296" y="444" fill="#f8f8f8"/><rect x="1308" y="444" fill="#ececec"/><rect x="1320" y="444" fill="#e0e0e0"/><rect x="1332" y="444" fill="#e0e0e0"/><rect x="1344" y="444" fill="#e4e4e4"/><rect x="1356" y="444" fill="#dcdcdc"/><rect x="1368" y="444" fill="#dcdcdc"/><rect x="1380" y="444" fill="#ececec"/>
<rect x="1176" y="456" fill="#ccc8c4"/><rect x="1188" y="456" fill="#ccc8c4"/><rect x="1200" y="456" fill="#e0dcd8"/><rect x="1212" y="456" fill="#a0a09c"/><rect x="1224" y="456" fill="#706458"/><rect x="1236" y="456" fill="#b0a4a0"/><rect x="1248" y="456" fill="#a0a0a0"/><rect x="1260" y="456" fill="#a0a0a0"/><rect x="1272" y="456" fill="#989898"/><rect x="1284" y="456" fill="#a0a0a0"/><rect x="1296" y="456" fill="#f4f4f4"/><rect x="1308" y="456" fill="#848484"/><rect x="1320" y="456" fill="#8c8c8c"/><rect x="1332" y="456" fill="#9c9c9c"/><rect x="1344" y="456" fill="#9c9c9c"/><rect x="1356" y="456" fill="#a8a8a8"/><rect x="1368" y="456" fill="#a8a8a8"/><rect x="1380" y="456" fill="#c0c0c0"/><rect x="1392" y="456" fill="#949494"/><rect x="1404" y="456" fill="#b4b4b4"/><rect x="1416" y="456" fill="#f4f4f4"/>
<rect x="1236" y="468" fill="#f0f0f0"/><rect x="1248" y="468" fill="#bcbcbc"/><rect x="1260" y="468" fill="#bcbcbc"/><rect x="1272" y="468" fill="#d0d0d0"/><rect x="1284" y="468" fill="#c8c8c8"/><rect x="1296" y="468" fill="#b8b8b8"/><rect x="1308" y="468" fill="#a8a8a8"/><rect x="1320" y="468" fill="#b0b0b0"/><rect x="1332" y="468" fill="#c0c0c0"/><rect x="1344" y="468" fill="#c8c8c8"/><rect x="1356" y="468" fill="#f0f0f0"/><rect x="1368" y="468" fill="#f4f4f4"/><rect x="1380" y="468" fill="#f8f8f8"/><rect x="1392" y="468" fill="#f8f8f8"/><rect x="1404" y="468" fill="#f4f4f4"/>
<!-- SKU row 2 -->
<g id="sku2">
<rect x="1176" y="528" fill="#eae6e4"/><rect x="1188" y="528" fill="#f2ece8"/><rect x="1200" y="528" fill="#f0ece8"/><rect x="1212" y="528" fill="#e6e0dc"/><rect x="1224" y="528" fill="#dedad6"/><rect x="1236" y="528" fill="#e4e4e4"/><rect x="1248" y="528" fill="#c0c0c0"/><rect x="1260" y="528" fill="#dcdcdc"/><rect x="1284" y="528" fill="#c0c0c0"/><rect x="1296" y="528" fill="#d4d4d4"/><rect x="1308" y="528" fill="#e8e8e8"/><rect x="1320" y="528" fill="#e8e8e8"/><rect x="1332" y="528" fill="#e4e4e4"/><rect x="1344" y="528" fill="#f0f0f0"/>
<rect x="1176" y="540" fill="#e8e0da"/><rect x="1188" y="540" fill="#b8a090"/><rect x="1200" y="540" fill="#6c5848"/><rect x="1212" y="540" fill="#585048"/><rect x="1224" y="540" fill="#786050"/><rect x="1236" y="540" fill="#b0a098"/><rect x="1248" y="540" fill="#c0c0c0"/><rect x="1260" y="540" fill="#c0c0c0"/><rect x="1272" y="540" fill="#dcdcdc"/><rect x="1284" y="540" fill="#c8c8c8"/><rect x="1296" y="540" fill="#c8c8c8"/><rect x="1308" y="540" fill="#cccccc"/><rect x="1320" y="540" fill="#bcbcbc"/><rect x="1332" y="540" fill="#c4c4c4"/><rect x="1344" y="540" fill="#d8d8d8"/><rect x="1356" y="540" fill="#d8d8d8"/><rect x="1368" y="540" fill="#b0b0b0"/><rect x="1380" y="540" fill="#b0b0b0"/><rect x="1392" y="540" fill="#b8b8b8"/><rect x="1404" y="540" fill="#fdecea"/><rect x="1416" y="540" fill="#fdf2ee"/>
<rect x="1176" y="552" fill="#9c7c68"/><rect x="1188" y="552" fill="#603010"/><rect x="1200" y="552" fill="#684030"/><rect x="1212" y="552" fill="#5c3c30"/><rect x="1224" y="552" fill="#683820"/><rect x="1236" y="552" fill="#987c68"/><rect x="1248" y="552" fill="#dcdcdc"/><rect x="1260" y="552" fill="#e0e0e0"/><rect x="1272" y="552" fill="#e8e8e8"/><rect x="1284" y="552" fill="#d8d8d8"/><rect x="1296" y="552" fill="#e8e8e8"/><rect x="1308" y="552" fill="#ececec"/><rect x="1320" y="552" fill="#ececec"/><rect x="1332" y="552" fill="#e8e8e8"/><rect x="1344" y="552" fill="#f0f0f0"/>
<rect x="1176" y="564" fill="#987060"/><rect x="1188" y="564" fill="#a88878"/><rect x="1200" y="564" fill="#583830"/><rect x="1212" y="564" fill="#544038"/><rect x="1224" y="564" fill="#885c50"/><rect x="1236" y="564" fill="#a08070"/><rect x="1248" y="564" fill="#dcdcdc"/><rect x="1260" y="564" fill="#e0e0e0"/><rect x="1272" y="564" fill="#f4f4f4"/><rect x="1284" y="564" fill="#e4e4e4"/><rect x="1296" y="564" fill="#e0e0e0"/><rect x="1308" y="564" fill="#d8d8d8"/><rect x="1320" y="564" fill="#dcdcdc"/><rect x="1332" y="564" fill="#d8d8d8"/><rect x="1344" y="564" fill="#e8e8e8"/><rect x="1356" y="564" fill="#f8f8f8"/><rect x="1368" y="564" fill="#f8f8f8"/><rect x="1380" y="564" fill="#fcfcfc"/><rect x="1392" y="564" fill="#f8f8f8"/>
<rect x="1176" y="576" fill="#b8a090"/><rect x="1188" y="576" fill="#ccc0b8"/><rect x="1200" y="576" fill="#483838"/><rect x="1212" y="576" fill="#644850"/><rect x="1224" y="576" fill="#7c5040"/><rect x="1236" y="576" fill="#a48878"/><rect x="1248" y="576" fill="#d8d8d8"/><rect x="1260" y="576" fill="#d8d8d8"/><rect x="1272" y="576" fill="#d4d4d4"/><rect x="1284" y="576" fill="#d8d8d8"/><rect x="1296" y="576" fill="#f8f8f8"/><rect x="1308" y="576" fill="#e0e0e0"/><rect x="1320" y="576" fill="#e0e0e0"/><rect x="1332" y="576" fill="#e8e8e8"/><rect x="1344" y="576" fill="#dcdcdc"/><rect x="1356" y="576" fill="#dcdcdc"/><rect x="1368" y="576" fill="#e8e8e8"/><rect x="1380" y="576" fill="#e8e8e8"/><rect x="1392" y="576" fill="#dcdcdc"/><rect x="1404" y="576" fill="#e8e8e8"/>
<rect x="1176" y="588" fill="#f0ecec"/><rect x="1188" y="588" fill="#e0d8d8"/><rect x="1200" y="588" fill="#887870"/><rect x="1212" y="588" fill="#907060"/><rect x="1224" y="588" fill="#a88070"/><rect x="1236" y="588" fill="#c4b0a0"/><rect x="1248" y="588" fill="#ececec"/>
<rect x="1236" y="600" fill="#f4f4f4"/><rect x="1248" y="600" fill="#989898"/><rect x="1260" y="600" fill="#989898"/><rect x="1272" y="600" fill="#8c8c8c"/><rect x="1284" y="600" fill="#989898"/><rect x="1296" y="600" fill="#f0f0f0"/><rect x="1308" y="600" fill="#e0e0e0"/><rect x="1320" y="600" fill="#b0b0b0"/><rect x="1332" y="600" fill="#e8e8e8"/><rect x="1344" y="600" fill="#b8b8b8"/><rect x="1356" y="600" fill="#989898"/><rect x="1368" y="600" fill="#a0a0a0"/><rect x="1380" y="600" fill="#b0b0b0"/><rect x="1392" y="600" fill="#bcbcbc"/><rect x="1404" y="600" fill="#d8d8d8"/>
<rect x="1236" y="612" fill="#f4f4f4"/><rect x="1248" y="612" fill="#9c9c9c"/><rect x="1260" y="612" fill="#9c9c9c"/><rect x="1272" y="612" fill="#989898"/><rect x="1284" y="612" fill="#d4d4d4"/><rect x="1296" y="612" fill="#d4d4d4"/><rect x="1308" y="612" fill="#9c9c9c"/><rect x="1320" y="612" fill="#bcbcbc"/><rect x="1332" y="612" fill="#bcbcbc"/><rect x="1344" y="612" fill="#b4b4b4"/><rect x="1356" y="612" fill="#b4b4b4"/><rect x="1368" y="612" fill="#a8a8a8"/><rect x="1380" y="612" fill="#b0b0b0"/><rect x="1392" y="612" fill="#b0b0b0"/><rect x="1404" y="612" fill="#b4b4b4"/><rect x="1416" y="612" fill="#e8e8e8"/>
<rect x="1236" y="624" fill="#f8f8f8"/><rect x="1248" y="624" fill="#bcbcbc"/><rect x="1260" y="624" fill="#bcbcbc"/><rect x="1272" y="624" fill="#a8a8a8"/><rect x="1284" y="624" fill="#c4c4c4"/><rect x="1296" y="624" fill="#a4a4a4"/><rect x="1308" y="624" fill="#f0f0f0"/>
<rect x="1236" y="636" fill="#f8f8f8"/><rect x="1248" y="636" fill="#f4f4f4"/><rect x="1260" y="636" fill="#f4f4f4"/><rect x="1272" y="636" fill="#f4f4f4"/><rect x="1284" y="636" fill="#f4f4f4"/><rect x="1296" y="636" fill="#f4f4f4"/>
</g>
<use href="#sku2" y="144"/>
</g>
<rect x="800" y="792" width="256" height="3" fill="#e4e4e4"/>
</svg>

<!-- promise time column -->
<div class="pk" style="left:645px;top:387px;width:103px">因抽检不合格创建</div>
<div class="bl" style="top:411px">承诺发货</div><div class="dt" style="top:407px">03-12 06:58:22</div>
<div class="od" style="top:430px">已逾期</div>
<div class="bl" style="top:455px">承诺到货</div><div class="dt" style="top:452px">03-14 06:58:22</div>
<div class="od" style="top:474px">已逾期</div>

<div class="pk" style="left:645px;top:532px;width:103px">因抽检不合格创建</div>
<div class="bl" style="top:554px">承诺发货</div><div class="dt" style="top:551px">03-13 06:37:38</div>
<div class="od" style="top:574px">已逾期</div>
<div class="bl" style="top:599px">承诺到货</div><div class="dt" style="top:596px">03-15 06:37:38</div>
<div class="od" style="top:618px">已逾期</div>

<div class="pk" style="left:648px;top:676px;width:101px">因抽检不合格创建</div>
<div class="bl" style="top:698px">承诺发货</div><div class="dt" style="top:695px">03-13 06:37:38</div>
<div class="od" style="top:718px">已逾期</div>
<div class="bl" style="top:743px">承诺到货</div><div class="dt" style="top:740px">03-15 06:37:38</div>
<div class="od" style="top:762px">已逾期</div>

<div class="rd" style="left:638px;top:380px;width:113px;height:32px"></div>
<div class="rd" style="left:641px;top:522px;width:111px;height:32px"></div>
<div class="rd" style="left:645px;top:671px;width:108px;height:29px"></div>
<div class="an" style="left:768px;top:371px">标识</div>

<!-- fixed right columns -->
<div class="a" style="left:1502px;top:341px;width:10px;height:466px;background:linear-gradient(90deg,rgba(0,0,0,0),rgba(0,0,0,.06));z-index:2"></div>
<div class="a" style="left:1512px;top:372px;width:207px;height:435px;background:#fff;z-index:2"></div>
<div class="a" style="left:1512px;top:341px;width:207px;height:31px;background:#e2e7f6;border-radius:0 8px 0 0;z-index:2"></div>
<div class="h" style="left:1521px;z-index:3">加急标识</div>
<div class="h" style="left:1624px;z-index:3">操作</div>
<div class="v" style="left:1630px;top:341px;height:466px;z-index:3"></div>
<div class="r" style="left:1630px;top:515px;width:89px;z-index:3"></div>
<div class="r" style="left:1630px;top:659px;width:89px;z-index:3"></div>
<div class="r" style="left:1512px;top:515px;width:118px;z-index:3"></div>
<div class="r" style="left:1512px;top:803px;width:207px;z-index:3"></div>
<div class="a" style="left:1513px;top:636px;width:1.500px;height:24px;background:#9dbdf8;z-index:3"></div>

<div class="s" style="left:1526px;top:395px;width:89px;background:#f4f4f5;border:1px solid #e4e4e4;color:#aaa;line-height:20px">加急标识-未打印</div>
<div class="s" style="left:1516px;top:420px;width:109px">打印外箱加急标识</div>
<div class="s" style="left:1538px;top:445px;width:65px">更换物流</div>
<div class="s" style="left:1527px;top:470px;width:87px">打印大包标签</div>

<div class="s" style="left:1526px;top:611px;width:89px;background:#f4f4f5;border:1px solid #e4e4e4;color:#aaa;line-height:20px">加急标识-未打印</div>
<div class="s" style="left:1516px;top:636px;width:109px">打印外箱加急标识</div>
<div class="s" style="left:1538px;top:661px;width:65px">更换物流</div>
<div class="s" style="left:1527px;top:686px;width:87px">打印大包标签</div>

<div class="s" style="left:1642px;top:408px;width:64px;height:21px;line-height:21px">打印箱唛</div>
<div class="s" style="left:1642px;top:433px;width:64px;height:21px;line-height:21px">打印条码</div>
<div class="s" style="left:1642px;top:458px;width:64px;height:21px;line-height:21px">操作日志</div>
<div class="s" style="left:1642px;top:552px;width:64px;height:21px;line-height:21px">打印箱唛</div>
<div class="s" style="left:1642px;top:577px;width:64px;height:21px;line-height:21px">打印条码</div>
<div class="s" style="left:1642px;top:602px;width:64px;height:21px;line-height:21px">操作日志</div>
<div class="s" style="left:1642px;top:696px;width:64px;height:21px;line-height:21px">打印箱唛</div>
<div class="s" style="left:1642px;top:721px;width:64px;height:21px;line-height:21px">打印条码</div>
<div class="s" style="left:1642px;top:746px;width:64px;height:21px;line-height:21px">操作日志</div>

<!-- pagination -->
<div class="a" style="left:689px;top:795px;width:362px;height:24px;background:#b2b2b2;border-radius:12px;z-index:7"></div>
<div class="x" style="left:703px;top:800px;color:#fff;font-size:13px;letter-spacing:1px;z-index:8">共 4 条</div>
<div class="a" style="left:750px;top:799px;width:83px;height:20px;background:#f0f0f0;border-radius:8px;z-index:8"></div>
<div class="x" style="left:765px;top:801px;color:#888;z-index:8;font-size:14px">50条/页</div>
<div class="a" style="left:868px;top:795px;width:1px;height:12px;background:#999;z-index:8"></div>
<div class="a" style="left:872px;top:802px;width:18px;height:18px;border-radius:9px;background:#7a8aa8;z-index:8"></div>
<div class="x" style="left:878px;top:801px;color:#fff;z-index:9">1</div>
<div class="x" style="left:941px;top:800px;color:#fff;z-index:8">前往</div>
<div class="a" style="left:973px;top:800px;width:43px;height:20px;background:#f0f0f0;border-radius:8px;z-index:8"></div>
<div class="x" style="left:991px;top:801px;color:#444;z-index:9">1</div>
<div class="x" style="left:1023px;top:800px;color:#fff;font-size:14px;z-index:8">页</div>

<!-- help + scrollbar -->
<div class="a" style="left:1733px;top:0;width:2px;height:665px;background:#e2e2e2;z-index:7"></div>
<div class="a" style="left:1707px;top:364px;width:28px;height:42px;background:#f06478;border-radius:6px 0 0 6px;color:#fff;font-size:24px;font-weight:bold;line-height:42px;text-align:left;padding-left:7px;z-index:8">?</div>
</div></body></html>
